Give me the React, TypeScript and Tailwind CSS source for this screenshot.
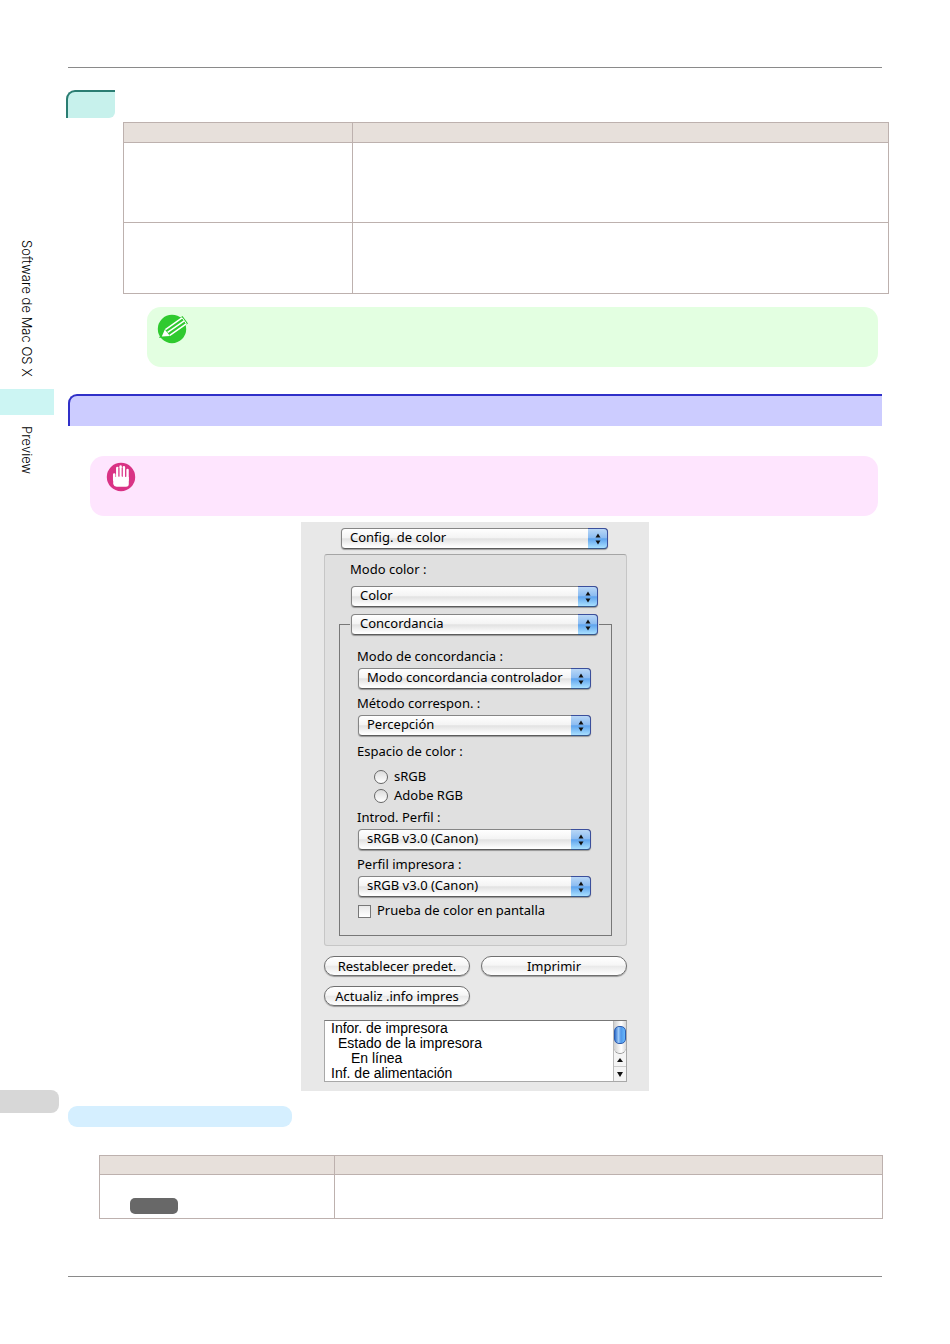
import React, { useId } from "react";

const panelFont = "font-['Noto_Sans','Noto_Sans_CJK_JP',sans-serif] text-[13px] text-black";

function PopupSelect({ label, options, spaced }: { label?: string; options: string[]; spaced?: boolean }) {
  const id = useId();
  return (
    <div className={`flex flex-col ${spaced ? "gap-[5px]" : ""}`}>
      {label && (
        <label htmlFor={id} className="-ml-px h-[22px] leading-[21px]">
          {label}
        </label>
      )}
      <div className="relative h-[21px]">
        <select
          id={id}
          aria-label={label ? undefined : options[0]}
          className="block h-[21px] w-full appearance-none rounded-[4px] border border-[#858585] border-b-[#5c5c5c] bg-[linear-gradient(#ffffff,#f4f4f4_45%,#e2e2e2_52%,#ffffff_95%)] pr-6 pb-[2px] pl-2 leading-[17px] shadow-[0_1px_1px_#00000055]"
        >
          {options.map((o) => (
            <option key={o}>{o}</option>
          ))}
        </select>
        <span className="pointer-events-none absolute top-0 right-0 flex h-[21px] w-5 items-center justify-center rounded-r-[4px] border border-l-0 border-[#3b4f9c] border-b-[#35578a] bg-[linear-gradient(#b9d7f6,#8dbdf2_45%,#5fa4ee_52%,#a9e0ff)]">
          <svg viewBox="0 0 6 12" className="h-3 w-[6px]" aria-hidden="true">
            <path d="M3 0.5 5.5 4.5H0.5ZM3 11.5 0.5 7.5H5.5Z" fill="#111" />
          </svg>
        </span>
      </div>
    </div>
  );
}

function PushButton({ children }: { children: React.ReactNode }) {
  return (
    <button
      type="button"
      className="h-5 rounded-full border border-[#707070] bg-[linear-gradient(#ffffff,#f6f6f6_45%,#e9e9e9_52%,#ffffff)] leading-[18px] shadow-[0_1px_1px_#00000055]"
    >
      {children}
    </button>
  );
}

function Radio({ label }: { label: string }) {
  return (
    <label className="flex h-[19px] items-center gap-[6px]">
      <input
        type="radio"
        name="space"
        className="size-[14px] appearance-none rounded-full border border-[#666] bg-[linear-gradient(#dcdcdc,#ffffff)] checked:border-4"
      />
      {label}
    </label>
  );
}

function PencilIcon() {
  return (
    <svg viewBox="0 0 32 30" className="h-[30px] w-8" fill="none" aria-hidden="true">
      <circle cx="15" cy="15" r="14.2" fill="#2fca2f" />
      <path d="M2 24 6.5 16 25.5 2 31 9.5 12.5 22Z" fill="#2fca2f" />
      <path d="M4.8 22.6 7.8 15.6 13 22Z" fill="#fff" />
      <path d="M8.4 15.6 25 3.8M10.6 18.4 27.2 6.8M12.8 21.4 29.2 9.8" stroke="#fff" strokeWidth="1.5" />
      <path d="M25 3.6 29.4 9.8" stroke="#fff" strokeWidth="1" />
    </svg>
  );
}

function HandIcon() {
  return (
    <svg viewBox="0 0 30 30" className="size-[30px]" fill="none" aria-hidden="true">
      <circle cx="15" cy="15" r="14.2" fill="#d93385" />
      <path d="M7.2 15H22.8V22Q22.8 24.8 20 24.8H10.6Q8 24.8 7.2 22Z" fill="#fff" />
      <path d="M8.2 12.6V18M11.3 6V18M14.6 4.6V18M17.9 5.2V18M21.5 8V18" stroke="#fff" strokeWidth="2.5" strokeLinecap="round" />
      <path d="M12.9 6V14M16.2 6V14M19.7 7V14" stroke="#d93385" strokeWidth="0.8" />
    </svg>
  );
}

const cell = "border border-[#bdb1ae] p-0";

export default function App() {
  return (
    <div className="flex min-h-screen bg-white">
      <aside className="flex w-[59px] shrink-0 flex-col font-['Inter',sans-serif] text-[13px] leading-4 font-light text-black">
        <div className="flex h-[389px] items-end pb-3 pl-[19px]">
          <span className="[writing-mode:vertical-rl]">Software de Mac OS X</span>
        </div>
        <div className="mr-[5px] h-[26px] bg-[#ccf5f3]" />
        <div className="h-[675px] pt-[11px] pl-[19px]">
          <span className="[writing-mode:vertical-rl]">Preview</span>
        </div>
        <div className="h-[23px] rounded-r-lg bg-[#d7d7d7]" />
      </aside>

      <main className="flex grow flex-col pt-[67px] pr-[68px] pl-[9px]">
        <hr className="border-[#8a8a8a]" />
        <div className="mt-[22px] -ml-[2px] h-7 w-[49px] rounded-tl-[9px] rounded-br-md border-t-2 border-l-2 border-[#2a7d72] bg-[#c7f1ec]" />

        <div className="mt-1 -mr-[7px] ml-[55px]">
          <table className="w-full table-fixed border-collapse">
            <colgroup>
              <col className="w-[229px]" />
              <col />
            </colgroup>
            <thead>
              <tr className="h-5 bg-[#e7e0db]">
                <th className={cell} />
                <th className={cell} />
              </tr>
            </thead>
            <tbody>
              <tr className="h-20">
                <td className={cell} />
                <td className={cell} />
              </tr>
              <tr className="h-[71px]">
                <td className={cell} />
                <td className={cell} />
              </tr>
            </tbody>
          </table>
        </div>

        <section className="mt-[13px] mr-1 ml-[79px] h-[60px] rounded-[14px] bg-[#e3ffe1] pt-[7px] pl-[10px]">
          <PencilIcon />
        </section>

        <div className="mt-[27px] h-8 rounded-tl-[9px] border-t-2 border-l-2 border-[#3030c8] bg-[#ccccff]" />

        <section className="mt-[30px] mr-1 ml-[22px] h-[60px] rounded-[14px] bg-[#fee5fe] pt-[6px] pl-4">
          <HandIcon />
        </section>

        <form className={`mt-[6px] flex w-[348px] flex-col self-center bg-[#e8e8e8] pt-[6px] pr-[22px] pb-[9px] pl-[23px] ${panelFont}`}>
          <div className="mr-[19px] ml-[17px]">
            <PopupSelect options={["Config. de color"]} />
          </div>

          <div className="mt-[5px] rounded-[3px] border border-[#c6c6c6] border-t-[#a5a5a5] bg-[#e0e0e0] px-[14px] pb-[9px]">
            <div className="mr-[14px] ml-3 pt-1">
              <PopupSelect label="Modo color :" options={["Color"]} spaced />
            </div>
            <div className="mt-[17px] border border-[#777] px-[18px] pb-[14px]">
              <div className="relative -mt-[11px] -mr-[6px] -ml-2 bg-[#e0e0e0] px-px">
                <PopupSelect options={["Concordancia"]} />
              </div>
              <div className="mt-[11px] mr-[2px] flex flex-col gap-1">
                <PopupSelect label="Modo de concordancia :" options={["Modo concordancia controlador"]} />
                <PopupSelect label="Método correspon. :" options={["Percepción"]} />
                <fieldset>
                  <legend className="-ml-px h-[22px] leading-[22px]">Espacio de color :</legend>
                  <div className="-mb-[2px] pt-[5px] pl-4">
                    <Radio label="sRGB" />
                    <Radio label="Adobe RGB" />
                  </div>
                </fieldset>
                <PopupSelect label="Introd. Perfil :" options={["sRGB v3.0 (Canon)"]} />
                <PopupSelect label="Perfil impresora :" options={["sRGB v3.0 (Canon)"]} />
                <label className="flex h-5 items-center gap-[6px]">
                  <input type="checkbox" className="size-[13px] appearance-none border border-[#777] bg-[linear-gradient(#e8e8e8,#ffffff)] checked:bg-[#5fa4ee]" />
                  Prueba de color en pantalla
                </label>
              </div>
            </div>
          </div>

          <div className="mt-[10px] grid grid-cols-2 gap-x-[11px] gap-y-[10px]">
            <PushButton>Restablecer predet.</PushButton>
            <PushButton>Imprimir</PushButton>
            <PushButton>Actualiz .info impres</PushButton>
          </div>

          <div className="mt-[14px] flex h-[62px] border border-[#a8a8a8] border-t-[#777] bg-white">
            <ul className="flex grow flex-col justify-between overflow-hidden pl-[6px] font-['Liberation_Sans',sans-serif] text-[14px] leading-[15px]">
              <li>Infor. de impresora</li>
              <li className="pl-[7px]">Estado de la impresora</li>
              <li className="pl-5">En línea</li>
              <li>Inf. de alimentación</li>
            </ul>
            <div className="flex w-[13px] flex-col border-l border-[#bbb] bg-[#f4f4f4]">
              <div className="h-8 rounded-b-md bg-[linear-gradient(90deg,#cfcfcf,#ffffff_60%,#d8d8d8)] pt-[5px] shadow-[0_1px_0_#999]">
                <div className="h-[18px] rounded-[5px] border border-[#2c5cae] bg-[linear-gradient(90deg,#2f6fcc,#9cc9f8_35%,#4f97ea_60%,#69b8fb)]" />
              </div>
              <button type="button" aria-label="Subir" className="flex h-[14px] items-center justify-center border-b border-[#ccc]">
                <svg viewBox="0 0 6 4" className="h-1 w-[6px]"><path d="M3 0 6 4H0Z" fill="#111" /></svg>
              </button>
              <button type="button" aria-label="Bajar" className="flex h-[14px] items-center justify-center">
                <svg viewBox="0 0 6 5" className="h-[5px] w-[6px]"><path d="M3 5 6 0H0Z" fill="#111" /></svg>
              </button>
            </div>
          </div>
        </form>

        <div className="mt-[15px] h-[21px] w-[224px] rounded-[9px] bg-[#d5efff]" />

        <div className="mt-7 -mr-px ml-[31px]">
          <table className="w-full table-fixed border-collapse">
            <colgroup>
              <col className="w-[235px]" />
              <col />
            </colgroup>
            <thead>
              <tr className="h-[19px] bg-[#e7e0db]">
                <th className={cell} />
                <th className={cell} />
              </tr>
            </thead>
            <tbody>
              <tr className="h-11">
                <td className={`${cell} align-bottom`}>
                  <div className="mb-1 ml-[30px] h-4 w-12 rounded-[5px] bg-[#686868]" />
                </td>
                <td className={cell} />
              </tr>
            </tbody>
          </table>
        </div>

        <hr className="mt-[57px] mb-16 border-[#8a8a8a]" />
      </main>
    </div>
  );
}
